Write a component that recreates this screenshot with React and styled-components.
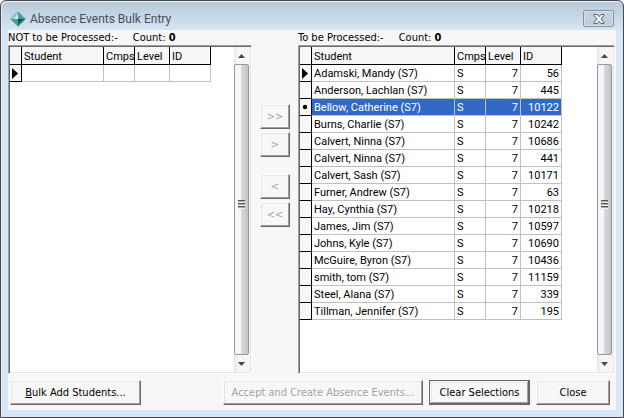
import { useState } from "react";
import styled, { createGlobalStyle, css } from "styled-components";

const students = [
  { name: "Adamski, Mandy (S7)", campus: "S", level: 7, id: 56 },
  { name: "Anderson, Lachlan (S7)", campus: "S", level: 7, id: 445 },
  { name: "Bellow, Catherine (S7)", campus: "S", level: 7, id: 10122 },
  { name: "Burns, Charlie (S7)", campus: "S", level: 7, id: 10242 },
  { name: "Calvert, Ninna (S7)", campus: "S", level: 7, id: 10686 },
  { name: "Calvert, Ninna (S7)", campus: "S", level: 7, id: 441 },
  { name: "Calvert, Sash (S7)", campus: "S", level: 7, id: 10171 },
  { name: "Furner, Andrew (S7)", campus: "S", level: 7, id: 63 },
  { name: "Hay, Cynthia (S7)", campus: "S", level: 7, id: 10218 },
  { name: "James, Jim (S7)", campus: "S", level: 7, id: 10597 },
  { name: "Johns, Kyle (S7)", campus: "S", level: 7, id: 10690 },
  { name: "McGuire, Byron (S7)", campus: "S", level: 7, id: 10436 },
  { name: "smith, tom (S7)", campus: "S", level: 7, id: 11159 },
  { name: "Steel, Alana (S7)", campus: "S", level: 7, id: 339 },
  { name: "Tillman, Jennifer (S7)", campus: "S", level: 7, id: 195 },
];

const AppIcon = () => (
  <svg width="16" height="16" viewBox="0 0 16 16" aria-hidden="true">
    <path d="M8 0 16 8 8 16 0 8Z" fill="#7aa9ae" />
    <path d="M8 1 8 8 1 8Z" fill="#8fd0cd" />
    <path d="M8 1 15 8 8 8Z" fill="#3f9f9d" />
    <path d="M1 8 8 8 8 15Z" fill="#3fa19d" />
    <path d="M8 8 15 8 8 15Z" fill="#1d6b6e" />
    <path d="M8 3 4 8 8 8Z" fill="#c6efeb" />
    <path d="M8 8 12 8 8 12Z" fill="#0d4a52" />
  </svg>
);

const CloseIcon = () => (
  <svg width="12" height="10" viewBox="0 0 12 10" aria-hidden="true">
    <path
      d="M1 .5H4L6 2.7 8 .5H11V1.5L8 5 11 8.5V9.5H8L6 7.3 4 9.5H1V8.5L4 5 1 1.5Z"
      fill="#f7f9fb"
      stroke="#535b68"
    />
  </svg>
);

const PointerIcon = () => (
  <svg width="6" height="11" viewBox="0 0 6 11" aria-label="Current row">
    <path d="M0 0 6 5.5 0 11Z" fill="#000" />
  </svg>
);

const DotIcon = () => (
  <svg width="6" height="11" viewBox="0 0 6 11" aria-label="Selected row">
    <circle cx="3" cy="5" r="2.2" fill="#000" />
  </svg>
);

const Arrow = ({ down }) => (
  <svg width="7" height="4" viewBox="0 0 7 4" aria-hidden="true">
    <path d={down ? "M0 0H7L3.5 4Z" : "M0 4H7L3.5 0Z"} fill="#454545" />
  </svg>
);

const Scrollbar = () => (
  <Track>
    <ArrowButton type="button" aria-label="Scroll up">
      <Arrow />
    </ArrowButton>
    <Thumb>
      <Grip />
    </Thumb>
    <ArrowButton type="button" aria-label="Scroll down">
      <Arrow down />
    </ArrowButton>
  </Track>
);

const StudentGrid = ({ label, rows, current, selected, onSelect, nameWidth }) => (
  <Panel>
    <GridArea>
      <Table aria-label={label}>
        <colgroup>
          <Col $width={12} />
          <Col $width={nameWidth} />
          <Col $width={31} />
          <Col $width={35} />
          <Col $width={41} />
        </colgroup>
        <thead>
          <tr>
            <HeadCell />
            <HeadCell>Student</HeadCell>
            <HeadCell>Cmps</HeadCell>
            <HeadCell>Level</HeadCell>
            <HeadCell>ID</HeadCell>
          </tr>
        </thead>
        <tbody>
          {rows.map((row, i) => (
            <Row
              key={i}
              $selected={i === selected}
              onClick={() => onSelect && onSelect(i)}
            >
              <MarkerCell>
                {i === current && <PointerIcon />}
                {i === selected && <DotIcon />}
              </MarkerCell>
              <Cell>{row.name}</Cell>
              <Cell>{row.campus}</Cell>
              <Cell $number>{row.level}</Cell>
              <Cell $number>{row.id}</Cell>
            </Row>
          ))}
        </tbody>
      </Table>
    </GridArea>
    <Scrollbar />
  </Panel>
);

const App = () => {
  const [selected, setSelected] = useState(2);

  return (
    <>
      <GlobalStyle />
      <Window>
        <TitleBar>
          <AppIcon />
          <Title>Absence Events Bulk Entry</Title>
          <CloseButton type="button" aria-label="Close window">
            <CloseIcon />
          </CloseButton>
        </TitleBar>
        <Content>
          <Lists>
            <Side>
              <Caption>
                <span>NOT to be Processed:-</span>
                <span>
                  Count: <b>0</b>
                </span>
              </Caption>
              <StudentGrid
                label="Not to be processed"
                rows={[{}]}
                current={0}
                nameWidth={82}
              />
            </Side>
            <Movers>
              <MoverGroup>
                <MoveButton disabled>&gt;&gt;</MoveButton>
                <MoveButton disabled>&gt;</MoveButton>
              </MoverGroup>
              <MoverGroup>
                <MoveButton disabled>&lt;</MoveButton>
                <MoveButton disabled>&lt;&lt;</MoveButton>
              </MoverGroup>
            </Movers>
            <Side>
              <Caption>
                <span>To be Processed:-</span>
                <span>
                  Count: <b>0</b>
                </span>
              </Caption>
              <StudentGrid
                label="To be processed"
                rows={students}
                current={0}
                selected={selected}
                onSelect={setSelected}
                nameWidth={143}
              />
            </Side>
          </Lists>
          <Footer>
            <Button type="button" $width={131}>
              <u>B</u>ulk Add Students...
            </Button>
            <FooterRight>
              <Button type="button" $width={200} disabled>
                Accept and Create Absence Events...
              </Button>
              <Button
                type="button"
                $width={101}
                $primary
                onClick={() => setSelected(-1)}
              >
                Clear Selections
              </Button>
              <Button type="button" $width={74}>
                Close
              </Button>
            </FooterRight>
          </Footer>
        </Content>
      </Window>
    </>
  );
};
export default App;

// CSS

const GlobalStyle = createGlobalStyle`
  * {
    box-sizing: border-box;
  }
  body {
    margin: 0;
    background: #fff;
    color: #000;
    font-family: "DejaVu Sans Condensed", "DejaVu Sans", sans-serif;
    font-size: 11px;
  }
  button {
    font: inherit;
    color: inherit;
    padding: 0;
  }
`;

const Window = styled.div`
  display: flex;
  flex-direction: column;
  min-height: 100vh;
  padding: 0 7px 7px;
  border: 1px solid #47474c;
  border-radius: 6px 6px 0 0;
  background: linear-gradient(#b9c8d9, #d6e6f6 30px);
  box-shadow: inset 1px 1px 0 #e6eff8;
`;

const TitleBar = styled.header`
  display: flex;
  align-items: center;
  gap: 4px;
  height: 29px;
  padding: 6px 2px 0;
`;

const Title = styled.h1`
  flex: 1;
  margin: 0;
  color: #474d57;
  font-family: Roboto, sans-serif;
  font-size: 12px;
  font-weight: 400;
  line-height: 16px;
`;

const CloseButton = styled.button`
  display: flex;
  align-items: center;
  justify-content: center;
  width: 31px;
  height: 17px;
  border: 1px solid #8592a5;
  border-radius: 2px;
  background: linear-gradient(#c5d2e1, #bccbdc);
  box-shadow: inset 0 0 0 1px #d5e0ec;
`;

const Content = styled.main`
  display: flex;
  flex: 1;
  flex-direction: column;
  background: #f7f7f7;
`;

const Lists = styled.div`
  display: grid;
  flex: 1;
  grid-template-columns: 244fr 46px 317fr;
  padding-right: 1px;
`;

const Side = styled.section`
  display: flex;
  flex-direction: column;
  min-width: 0;
`;

const Caption = styled.div`
  display: flex;
  gap: 15px;
  height: 15px;
  line-height: 15px;
  white-space: nowrap;
`;

const Panel = styled.div`
  display: flex;
  flex: 1;
  border: 1px solid;
  border-color: #a0a0a0 #fff #fff #a0a0a0;
  background: #fff;
  box-shadow: inset 1px 1px 0 #696969, inset -1px -1px 0 #e3e3e3;
  padding: 1px;
`;

const GridArea = styled.div`
  flex: 1;
  min-width: 0;
  overflow: hidden;
`;

const Table = styled.table`
  width: min-content;
  table-layout: fixed;
  border-collapse: separate;
  border-spacing: 0;
  font-family: Roboto, "Liberation Sans", sans-serif;
  font-size: 11px;
  line-height: 15px;
`;

const Col = styled.col`
  width: ${({ $width }) => $width}px;
`;

const HeadCell = styled.th`
  height: 18px;
  padding: 1px 1px 0 2px;
  border-right: 1px solid #000;
  border-bottom: 1px solid #000;
  background: #f7f7f7;
  font-weight: 400;
  text-align: left;
`;

const Cell = styled.td`
  height: 17px;
  padding: 1px 2px 0;
  border-right: 1px solid #c0c0c0;
  border-bottom: 1px solid #c0c0c0;
  text-align: ${({ $number }) => ($number ? "right" : "left")};
  white-space: nowrap;
`;

const MarkerCell = styled.td`
  height: 17px;
  padding: 0 2px;
  border-right: 1px solid #000;
  border-bottom: 1px solid #000;
  background: #f7f7f7;

  svg {
    display: block;
  }
`;

const Row = styled.tr`
  ${({ $selected }) =>
    $selected &&
    css`
      ${Cell} {
        background: #316ac5;
        color: #fff;
      }
    `}
`;

/* scrollbar */
const Track = styled.div`
  display: flex;
  flex-direction: column;
  width: 16px;
  padding-right: 1px;
  background: linear-gradient(90deg, #e8e8e8, #f6f6f6 4px);
`;

const ArrowButton = styled.button`
  display: flex;
  align-items: center;
  justify-content: center;
  height: 17px;
  border: none;
  background: none;
`;

const Thumb = styled.div`
  display: flex;
  align-items: center;
  justify-content: center;
  flex: 1;
  padding-bottom: 10px;
  border: 1px solid #97979b;
  border-radius: 2px;
  background: linear-gradient(90deg, #f6f6f6 45%, #d8d8dc 50%, #c2c3ca);
`;

const Grip = styled.div`
  width: 7px;
  height: 9px;
  background: repeating-linear-gradient(#555 0 1px, #aaa 1px 2px, #f2f2f2 2px 3px);
`;

/* buttons */
const Movers = styled.div`
  display: flex;
  flex-direction: column;
  align-items: center;
  gap: 17px;
  padding-top: 74px;
`;

const MoverGroup = styled.div`
  display: flex;
  flex-direction: column;
  gap: 3px;
`;

const Button = styled.button`
  width: ${({ $width }) => $width}px;
  height: 25px;
  border: 1px solid;
  border-color: #fff #696969 #696969 #fff;
  background: #f7f7f7;
  box-shadow: inset -1px -1px 0 #a0a0a0, inset 1px 1px 0 #e3e3e3;
  white-space: nowrap;

  &:disabled {
    color: #a0a0a0;
    text-shadow: 1px 1px 0 #fff;
  }

  ${({ $primary }) =>
    $primary &&
    css`
      border-color: #646464;
      box-shadow: inset -1px -1px 0 #696969, inset 1px 1px 0 #fff,
        inset -2px -2px 0 #a0a0a0, inset 2px 2px 0 #e3e3e3;
    `}
`;

const MoveButton = styled(Button).attrs({ type: "button", $width: 30 })``;

const Footer = styled.footer`
  display: flex;
  justify-content: space-between;
  padding: 6px 6px 5px 2px;
`;

const FooterRight = styled.div`
  display: flex;
  gap: 6px;
`;
